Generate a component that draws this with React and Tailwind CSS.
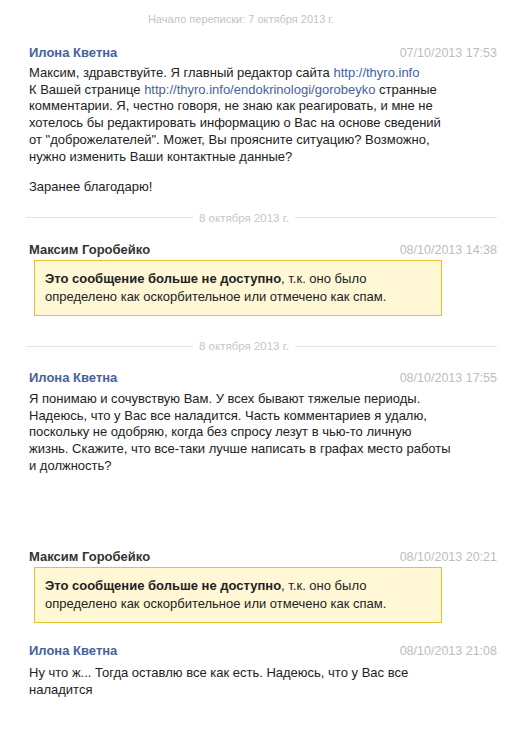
import React from "react";

const F = { fontFamily: '"Liberation Sans", Arial, sans-serif' };

function Header({ name, date, blue }) {
  return (
    <div className="flex items-baseline justify-between">
      <span className={"font-bold text-[13px] leading-[17px] " + (blue ? "text-[#45629b]" : "text-[#333333]")}>{name}</span>
      <span className="text-[12.5px] leading-[17px] text-[#bdbdbd]">{date}</span>
    </div>
  );
}

function Blocked() {
  return (
    <div className="ml-[5px] mr-[55px] mt-[1px] border border-[#e2c42c] bg-[#fff7d6] px-[10px] py-[9px] text-[13px] leading-[18px] text-[#222222]">
      <b>Это сообщение больше не доступно</b>, т.к. оно было определено как оскорбительное или отмечено как спам.
    </div>
  );
}

function Sep({ text }) {
  return (
    <div className="flex items-center gap-[6px] ml-[-3px]">
      <div className="h-px w-[167px] bg-[#e4e4e4]" />
      <span className="text-[11.5px] leading-[14px] text-[#c6c6c6]">{text}</span>
      <div className="h-px flex-1 bg-[#e4e4e4]" />
    </div>
  );
}

const link = "text-[#45629b]";
const body = "w-[422px] text-[13px] leading-[16.7px] text-[#222222]";

export default function App() {
  return (
    <div className="w-[506px] h-[746px] bg-white" style={F}>
      <div className="pt-[12px] text-center text-[11px] leading-[14px] text-[#c4c4c4] pr-[24px]">
        Начало переписки: 7 октября 2013 г.
      </div>
      <div className="pl-[29px] pr-[9px]">
        <div className="mt-[18px]">
          <Header name="Илона Кветна" date="07/10/2013 17:53" blue />
          <div className={"mt-[3px] " + body}>
            Максим, здравствуйте. Я главный редактор сайта <span className={link}>http://thyro.info</span>
            <br />
            К Вашей странице <span className={link}>http://thyro.info/endokrinologi/gorobeyko</span> странные комментарии. Я, честно говоря, не знаю как реагировать, и мне не хотелось бы редактировать информацию о Вас на основе сведений от "доброжелателей". Может, Вы проясните ситуацию? Возможно, нужно изменить Ваши контактные данные?
          </div>
          <div className={"mt-[14px] " + body}>Заранее благодарю!</div>
        </div>
        <div className="mt-[15px]"><Sep text="8 октября 2013 г." /></div>
        <div className="mt-[16.5px]">
          <Header name="Максим Горобейко" date="08/10/2013 14:38" />
          <Blocked />
        </div>
        <div className="mt-[23px]"><Sep text="8 октября 2013 г." /></div>
        <div className="mt-[15.5px]">
          <Header name="Илона Кветна" date="08/10/2013 17:55" blue />
          <div className={"mt-[4px] " + body}>
            Я понимаю и сочувствую Вам. У всех бывают тяжелые периоды. Надеюсь, что у Вас все наладится. Часть комментариев я удалю, поскольку не одобряю, когда без спросу лезут в чью-то личную жизнь. Скажите, что все-таки лучше написать в графах место работы и должность?
          </div>
        </div>
        <div className="mt-[74px]">
          <Header name="Максим Горобейко" date="08/10/2013 20:21" />
          <Blocked />
        </div>
        <div className="mt-[18.5px]">
          <Header name="Илона Кветна" date="08/10/2013 21:08" blue />
          <div className={"mt-[5px] " + body}>
            Ну что ж... Тогда оставлю все как есть. Надеюсь, что у Вас все наладится
          </div>
        </div>
      </div>
    </div>
  );
}
